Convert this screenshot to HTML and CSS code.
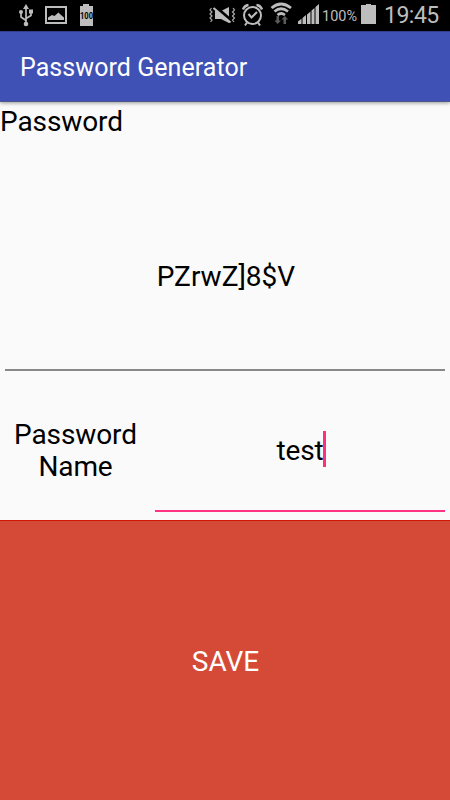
FILE: index.html
```
<!DOCTYPE html>
<html lang="en">
<head>
<meta charset="utf-8">
<title>Password Generator</title>
<link rel="stylesheet" href="styles.css">
</head>
<body>
<div class="screen">
  <div class="status">
    <svg class="notifications" width="110" height="31" viewBox="0 0 110 31">
      <g stroke="#bdbdbd" stroke-width="1.7" fill="none">
        <path d="M26 8v15M26 20.500l-5-3.500v-4M26 18.500l5-3V11"/>
      </g>
      <g fill="#bdbdbd">
        <path d="M26 4l3 5h-6z"/><circle cx="26" cy="24" r="2.300"/><circle cx="21" cy="12" r="2"/><path d="M29 9.500h4v4h-4z"/>
        <path fill-rule="evenodd" d="M45 6h22v18H45zM47 8v14h18V8z"/>
        <path d="M48 20v-2.500l4-2.500 2.500 1 4-3.500 2.500 2.500 3 2.500v2.500z"/>
        <path d="M83 4h6v2h4v20H80V6h3z"/>
      </g>
      <text class="badge" x="86.5" y="19" text-anchor="middle" textLength="13" lengthAdjust="spacingAndGlyphs">100</text>
    </svg>
    <div class="indicators">
      <svg width="111" height="31" viewBox="209 0 111 31">
        <g fill="none" stroke="#a9a9a9" stroke-width="1.2">
          <path d="M211.500 8l-1.500 2 2 2-2 2 2 2-2 2 2 2-1.500 2M233 8l1.500 2-2 2 2 2-2 2 2 2-2 2 1.500 2"/>
        </g>
        <path fill="#bdbdbd" d="M215 11h6l8-4v16l-8-4h-6z"/>
        <path d="M214 6l16 14" stroke="#000" stroke-width="4"/>
        <path d="M213.500 8l17 14.500" stroke="#bdbdbd" stroke-width="2.200"/>
        <g fill="none" stroke="#bdbdbd" stroke-width="2">
          <circle cx="252.500" cy="15.500" r="8.500"/><path d="M248.500 14l3 3.500 5.500-5.500"/>
          <path stroke-width="2.500" d="M243 9.500q1.500-4 5.500-4.500M256.500 5q4 .5 5.500 4.500"/><path d="M247 22.500l-2 3M258 22.500l2 3"/>
        </g>
        <g fill="none" stroke="#bdbdbd" stroke-width="2.700">
          <path d="M271.500 8q9.500-8 19.500 0M274.500 11.500q6.500-5.500 13.500 0M277.500 15q3.500-3 7.500 0"/>
        </g>
        <path fill="#5c5c5c" d="M276.500 16h2.500v4.500h2l-3.300 3.500-3.300-3.500h2.100zM283.500 24v-4.500h-2l3.300-3.500 3.300 3.500h-2.100v4.500z"/>
        <path fill="#bdbdbd" d="M298 24v-2.500l3.500-2.800V24zM302.500 24v-6l3.500-3v9zM307 24v-9.500l3.500-3V24zM311.500 24V10.500l3-2.500v16zM315.500 24V7l3.500-3v20z"/>
      </svg>
      <span class="percent">100%</span>
      <svg class="battery" width="15" height="31" viewBox="0 0 15 31"><path fill="#bdbdbd" d="M5 4h5v1h5v19H0V5h5z"/></svg>
      <span class="clock">19:45</span>
    </div>
  </div>
  <header class="appbar"><span class="title">Password Generator</span></header>
  <main class="content">
    <div class="label">Password</div>
    <div class="generated"><span class="code">PZrwZ]8$V</span></div>
    <div class="row">
      <div class="name">Password<br>Name</div>
      <div class="field"><span class="value">test</span><i class="caret"></i></div>
    </div>
  </main>
  <button class="save">SAVE</button>
</div>
</body>
</html>
```
FILE: styles.css
```
* { box-sizing: border-box; }
body { margin: 0; background: #fafafa; font-family: Roboto, "Liberation Sans", sans-serif; }
.screen { width: 450px; height: 800px; display: flex; flex-direction: column; overflow: hidden; color: #000; }
.status { height: 31px; flex: none; background: #000; color: #bdbdbd; display: flex; justify-content: space-between; }
.status svg { display: block; flex: none; }
.badge { font-size: 8.5px; font-weight: 700; fill: #000; }
.indicators { display: flex; width: 241px; }
.percent { width: 38px; margin-left: 2px; font-size: 14.5px; line-height: 33px; }
.battery { margin-left: 1px; }
.clock { margin-left: 8px; font-size: 23px; letter-spacing: -.5px; line-height: 31px; white-space: nowrap; }
.appbar { height: 71px; flex: none; padding-left: 20px; background: #3f51b5; color: #fff; border-top: 1px solid #303f8f; border-bottom: 1px solid #4c578d; box-shadow: 0 1px 4px rgba(0,0,0,.4); position: relative; }
.title { font-size: 25px; line-height: 72px; letter-spacing: .06px; }
.content { height: 418px; flex: none; }
.label { height: 38px; font-size: 28px; line-height: 40px; letter-spacing: -.1px; }
.generated { height: 231px; margin: 0 5px; border-bottom: 2px solid #888; display: flex; justify-content: center; padding: 118px 0 0 2px; font-size: 28px; line-height: 38px; }
.row { height: 149px; display: flex; }
.name { width: 150px; padding: 48px 0 0 1px; text-align: center; font-size: 28px; line-height: 32px; letter-spacing: -.1px; }
.field { width: 290px; height: 141px; margin-left: 5px; border-bottom: 2px solid #ff3382; display: flex; justify-content: center; padding-top: 60px; font-size: 28px; line-height: 40px; }
.value { letter-spacing: -.2px; }
.caret { width: 3px; height: 36px; margin: 0 -3px 0 0; background: #ff2f80; }
.save { height: 280px; flex: none; border: 0; border-top: 1px solid #cf1603; padding: 2px 0 0 1px; background: #d54a36; color: #fff; font: 28px/36px Roboto, "Liberation Sans", sans-serif; }
```
